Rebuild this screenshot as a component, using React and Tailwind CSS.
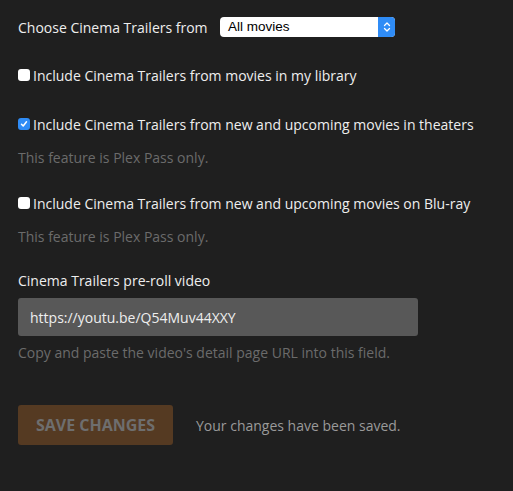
import { useState } from 'react'

const FONT = { fontFamily: '"Open Sans", sans-serif' }

function Box({ checked }) {
  return checked ? (
    <span className="w-3 h-3 rounded-[3px] bg-[#2f8cf6] flex items-center justify-center shrink-0">
      <svg width="8" height="8" viewBox="0 0 8 8" fill="none">
        <path d="M1.5 4.2 L3.2 6 L6.5 1.8" stroke="white" strokeWidth="1.5" strokeLinecap="round" strokeLinejoin="round" />
      </svg>
    </span>
  ) : (
    <span className="w-3 h-3 rounded-[3px] bg-white shrink-0" />
  )
}

function Check({ checked, label }) {
  return (
    <label className="flex items-center gap-[3px] h-5 text-[14px] text-[#eeeeee]">
      <Box checked={checked} />
      <span>{label}</span>
    </label>
  )
}

function Hint({ children }) {
  return <p className="text-[14px] text-[#6b6b6b] h-5 leading-5">{children}</p>
}

export default function App() {
  const [url] = useState('https://youtu.be/Q54Muv44XXY')
  return (
    <div className="w-[513px] h-[491px] bg-[#1f1f1f] px-[18px] pt-[17px]" style={FONT}>
      <div className="flex items-center h-5">
        <span className="text-[14px] text-[#eeeeee] w-[202px]">Choose Cinema Trailers from</span>
        <div className="flex w-[175px] h-5 rounded-[4px] bg-white overflow-hidden">
          <span className="flex-1 pl-2 text-[13.5px] leading-5 text-black" style={{ fontFamily: '"Liberation Sans", Arial, sans-serif' }}>All movies</span>
          <span className="w-[17px] bg-[#2f8cf6] flex items-center justify-center">
            <svg width="8" height="12" viewBox="0 0 8 12" fill="none">
              <path d="M1.5 4.5 L4 2 L6.5 4.5 M1.5 7.5 L4 10 L6.5 7.5" stroke="white" strokeWidth="1.3" strokeLinecap="round" strokeLinejoin="round" />
            </svg>
          </span>
        </div>
      </div>

      <div className="mt-[28px]">
        <Check label="Include Cinema Trailers from movies in my library" />
      </div>

      <div className="mt-[29px]">
        <Check checked label="Include Cinema Trailers from new and upcoming movies in theaters" />
        <div className="mt-[14px]"><Hint>This feature is Plex Pass only.</Hint></div>
      </div>

      <div className="mt-[25px]">
        <Check label="Include Cinema Trailers from new and upcoming movies on Blu-ray" />
        <div className="mt-[14px]"><Hint>This feature is Plex Pass only.</Hint></div>
      </div>

      <div className="mt-[24px]">
        <p className="text-[14px] leading-5 h-5 text-[#eeeeee]">Cinema Trailers pre-roll video</p>
        <input
          readOnly
          value={url}
          className="mt-[7px] w-[400px] h-[38px] rounded-[3px] bg-[#585858] px-3 text-[14px] text-[#eeeeee] outline-none"
        />
        <div className="mt-[7px]"><Hint>Copy and paste the video's detail page URL into this field.</Hint></div>
      </div>

      <div className="mt-[42px] flex items-center">
        <button className="w-[155px] h-[40px] rounded-[3px] bg-[#553a22] text-[16px] font-bold uppercase text-[#6e6e6e]">
          Save Changes
        </button>
        <span className="ml-[23px] text-[14px] text-[#9a9a9a]">Your changes have been saved.</span>
      </div>
    </div>
  )
}
